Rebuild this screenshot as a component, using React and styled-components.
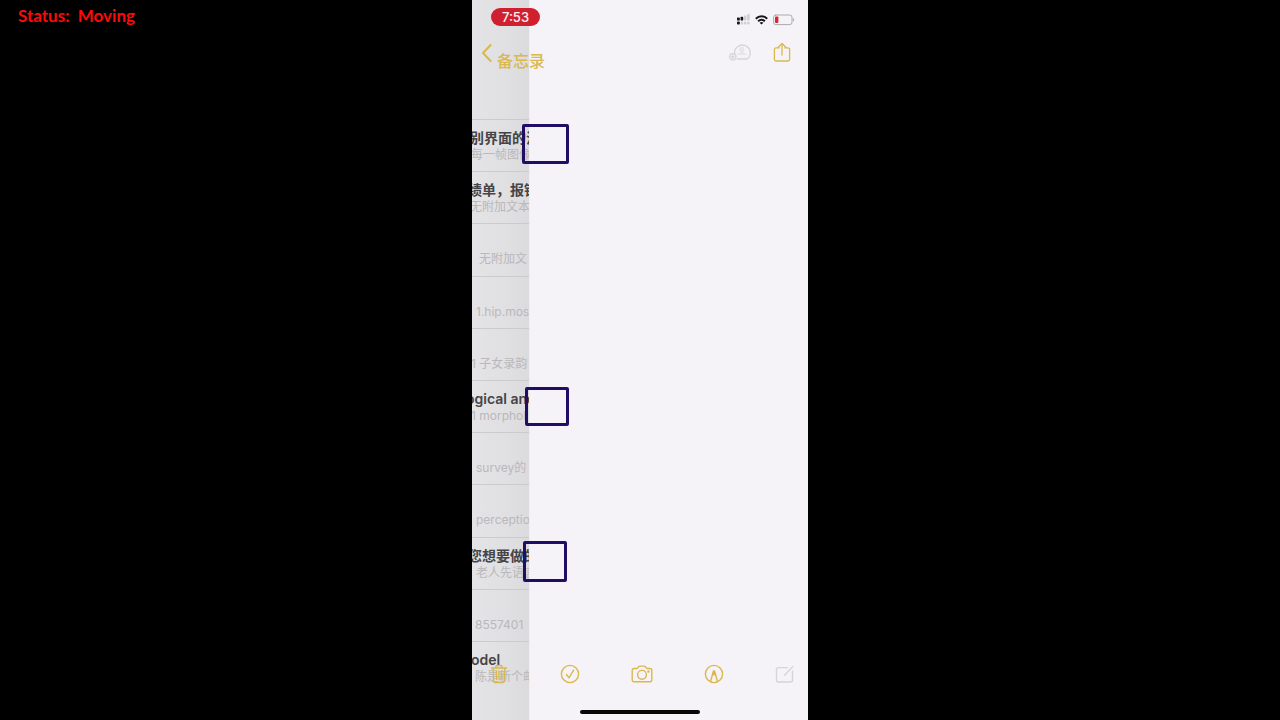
import React from "react";
import styled, { createGlobalStyle } from "styled-components";

const latin = '"Inter", "Liberation Sans"';
const cjk = '"Noto Sans CJK SC"';

const GlobalStyle = createGlobalStyle`
  *, *::before, *::after { box-sizing: border-box; }
  body {
    margin: 0;
    background: #000;
    font-family: ${latin}, ${cjk}, sans-serif;
  }
  h2, p, ul { margin: 0; padding: 0; }
`;

const Stage = styled.main`
  position: relative;
  display: flex;
  justify-content: center;
  min-height: 100vh;
  background: #000;
`;

const TrackerStatus = styled.p`
  position: absolute;
  top: 6px;
  left: 18px;
  color: #ff0808;
  font-family: "Lato", "Liberation Sans", sans-serif;
  font-size: 17px;
  font-weight: 700;
  line-height: 20px;
  white-space: pre;
`;

const Phone = styled.section`
  position: relative;
  display: grid;
  grid-template: minmax(0, 1fr) / minmax(0, 1fr);
  height: 100vh;
  aspect-ratio: 7 / 15;
  overflow: hidden;
  background: #f5f3f7;
`;

const Panes = styled.div`
  grid-area: 1 / 1;
  display: grid;
  grid-template-columns: 17% 1fr;
  min-height: 0;
`;

const NoteList = styled.ul`
  display: flex;
  flex-direction: column;
  min-width: 0;
  padding: 119px 0 27px;
  overflow: hidden;
  list-style: none;
  background: linear-gradient(90deg, #e4e3e6, #e0dfe2 60%, #dbdadd);
`;

const NoteItem = styled.li`
  flex: 1 1 0;
  min-height: 0;
  padding-top: 9px;
  overflow: hidden;
  border-top: 1px solid #cbcacd;
  white-space: nowrap;
`;

const NoteTitle = styled.h2`
  height: 17px;
  color: #454447;
  font-size: 14px;
  font-weight: 600;
  line-height: 17px;
  text-indent: ${(p) => p.$start}px;
`;

const NotePreview = styled.p`
  color: #b9b8bb;
  font-size: 12px;
  line-height: 18px;
  text-indent: ${(p) => p.$start}px;
`;

const NotePage = styled.article`
  background: #f5f3f7;
  border-left: 1px solid #efeef2;
`;

const Chrome = styled.div`
  z-index: 1;
  grid-area: 1 / 1;
  display: flex;
  flex-direction: column;
  min-height: 0;
`;

const StatusBar = styled.header`
  display: flex;
  align-items: flex-start;
  justify-content: space-between;
  height: 40px;
  padding: 8px 13px 0 19px;
`;

const Clock = styled.time`
  width: 49px;
  border-radius: 9px;
  background: #d0202f;
  color: #fff1f1;
  font-size: 13px;
  font-weight: 500;
  line-height: 18px;
  text-align: center;
`;

const Indicators = styled.div`
  display: flex;
  align-items: center;
  gap: 5px;
  padding-top: 6px;
  svg { display: block; }
`;

const NavBar = styled.nav`
  display: flex;
  align-items: flex-start;
  justify-content: space-between;
  padding: 0 14px 0 9px;
`;

const PlainButton = styled.button`
  display: flex;
  align-items: center;
  justify-content: center;
  padding: 0;
  border: 0;
  background: none;
  color: ${(p) => (p.$muted ? "#d5d4d7" : "#d9b84f")};
  font: inherit;
  svg { display: block; }
`;

const BackButton = styled(PlainButton)`
  align-items: flex-start;
  gap: 5px;
  padding-top: 3px;
  span {
    padding-top: 6px;
    font-size: 16px;
    font-weight: 500;
    line-height: 24px;
  }
`;

const NavActions = styled.div`
  display: flex;
  gap: 18px;
`;

const Toolbar = styled.footer`
  display: flex;
  justify-content: space-between;
  margin-top: auto;
  padding: 0 11px 24px 15px;
`;

const HomeIndicator = styled.div`
  align-self: center;
  width: 36%;
  height: 4px;
  margin-bottom: 6px;
  border-radius: 2px;
  background: #050505;
`;

const Marker = styled.div`
  position: absolute;
  z-index: 2;
  top: ${(p) => p.$y}px;
  left: ${(p) => p.$x}px;
  width: ${(p) => p.$w}px;
  height: ${(p) => p.$h}px;
  border: 3px solid #1f0d66;
  border-radius: 2px;
`;

const Glyph = ({ w = 24, h = 24, children, ...rest }) => (
  <svg
    width={w}
    height={h}
    viewBox={`0 0 ${w} ${h}`}
    fill="none"
    stroke="currentColor"
    strokeWidth="1.4"
    strokeLinecap="round"
    strokeLinejoin="round"
    aria-hidden="true"
    {...rest}
  >
    {children}
  </svg>
);

const SignalIcon = () => (
  <Glyph w={14} h={12} stroke="none" fill="#161616">
    <rect x="1" y="3.6" width="2.8" height="3" rx="0.7" />
    <rect x="4.6" y="2.8" width="2.6" height="3.8" rx="0.7" />
    <rect x="1" y="7.6" width="2.8" height="3" rx="0.8" />
    <g fill="#cfced2">
      <rect x="8" y="1.4" width="2.4" height="5.2" rx="0.7" />
      <rect x="11.2" y="0" width="2.4" height="6.6" rx="0.7" />
      <rect x="4.6" y="7.8" width="2.6" height="2.8" rx="0.8" />
      <rect x="8" y="7.8" width="2.4" height="2.8" rx="0.8" />
      <rect x="11.2" y="7.8" width="2.4" height="2.8" rx="0.8" />
    </g>
  </Glyph>
);

const WifiIcon = () => (
  <Glyph w={13} h={10} stroke="#161616" strokeWidth="2" strokeLinecap="butt">
    <path d="M.8 3.7C4.1.5 8.9.5 12.2 3.7M3.1 6.2c2-1.8 4.8-1.8 6.8 0" />
    <path d="M6.5 9.5 4.6 7.7c1.1-.9 2.7-.9 3.8 0Z" fill="#161616" stroke="none" />
  </Glyph>
);

const BatteryIcon = () => (
  <Glyph w={22} h={12} strokeWidth="1">
    <rect x=".6" y="1" width="18.4" height="9.6" rx="2.2" stroke="#aaa9ad" />
    <rect x="2" y="2.5" width="3.4" height="6.6" rx="1" fill="#d62638" stroke="none" />
    <path d="M20 4v3.6c.7-.3 1.1-1 1.1-1.8S20.700 4.300 20 4Z" fill="#aaa9ad" stroke="none" />
  </Glyph>
);

const ChevronIcon = () => (
  <Glyph w={11} h={20} strokeWidth="2">
    <path d="M9.600 2 2 10 9.600 18" />
  </Glyph>
);

const AddPersonIcon = () => (
  <Glyph strokeWidth="1.3">
    <path d="M6.600 13.600a7.800 7.800 0 1 1 12.600 5.400H9.200" />
    <path
      d="M13.700 6.400c1.600 0 2.600 1 2.600 2.500s-.8 2.500-1 3.100c.2 1 3 1 3.400 3H9c.4-2 3.200-2 3.400-3-.3-.6-1.200-1.500-1.200-3.100s1-2.500 2.500-2.500Z"
      fill="currentColor"
      fillOpacity=".45"
      stroke="none"
    />
    <circle cx="4.800" cy="16.800" r="3.200" />
    <path d="M3.300 16.800h3M4.800 15.300v3" />
  </Glyph>
);

const ShareIcon = () => (
  <Glyph strokeWidth="1.3">
    <path d="M9.200 7.800H6.200a1.800 1.800 0 0 0-1.800 1.800v9.600A1.800 1.800 0 0 0 6.200 21h11.600a1.800 1.800 0 0 0 1.800-1.800V9.600a1.800 1.800 0 0 0-1.800-1.800h-3M12 15V3.800M8.400 7 12 3.400 15.600 7" />
  </Glyph>
);

const TrashIcon = () => (
  <Glyph>
    <path d="M4.500 6h15M9 5.800V4.500c0-.6.400-1 1-1h4c.6 0 1 .4 1 1v1.300M6 6.200l.7 13c.1.800.6 1.300 1.400 1.300h7.800c.8 0 1.300-.5 1.400-1.300l.7-13M9.400 9l.2 8.500M12 9v8.500M14.600 9l-.2 8.500" />
  </Glyph>
);

const CheckIcon = () => (
  <Glyph>
    <circle cx="11" cy="12" r="8.6" />
    <path d="m7.500 12.500 2.500 3.300 4.600-7.600" />
  </Glyph>
);

const CameraIcon = () => (
  <Glyph>
    <path d="M2.200 8.400c0-1.200.7-1.900 1.900-1.900h2.400c.6 0 .9-.2 1.200-.6l.8-1.100c.4-.5.8-.7 1.400-.7h4.200c.6 0 1 .2 1.400.7l.8 1.100c.3.4.6.6 1.200.6h2.400c1.200 0 1.900.7 1.900 1.900v9.400c0 1.200-.7 1.900-1.900 1.900H4.100c-1.200 0-1.900-.7-1.900-1.900Z" />
    <circle cx="12" cy="12.800" r="4.400" />
    <circle cx="18.400" cy="9.500" r=".5" fill="currentColor" />
  </Glyph>
);

const MarkupIcon = () => (
  <Glyph>
    <circle cx="12" cy="12" r="8.600" />
    <path d="m8.600 19.300 2.800-10h1.200l2.800 10" />
    <path d="m9.900 14.300 1.400-5.600c.2-.7 1.200-.7 1.400 0l1.400 5.600c-.8-.7-1.400-1-2.100-1s-1.300.3-2.100 1Z" fill="currentColor" stroke="none" />
  </Glyph>
);

const ComposeIcon = () => (
  <Glyph>
    <path d="M14.500 5.600H5.400c-1.200 0-1.900.7-1.900 1.900v10.600c0 1.200.7 1.900 1.900 1.900h12.200c1.200 0 1.900-.7 1.900-1.900V9.200M11.600 13.300 19.800 4.600" />
  </Glyph>
);

const notes = [
  { title: "别界面的注", titleStart: -2, preview: "每一帧图像", previewStart: -1 },
  { title: "绩单，报销", titleStart: -4, preview: "无附加文本", previewStart: -2 },
  { preview: "无附加文", previewStart: 7 },
  { preview: "1.hip.mos", previewStart: 4 },
  { preview: "1 子女录韵", previewStart: -1 },
  { title: "ogical and", titleStart: -6, preview: "1 morphol", previewStart: -1 },
  { preview: "survey的", previewStart: 4 },
  { preview: "perceptio", previewStart: 4 },
  { title: "您想要做的", titleStart: -4, preview: "老人先语言", previewStart: 4 },
  { preview: "8557401", previewStart: 3 },
  { title: "odel", titleStart: -1, preview: "陈是新个邮", previewStart: 3 },
];

const markers = [
  { x: 50, y: 124, w: 47, h: 40 },
  { x: 53, y: 387, w: 44, h: 39 },
  { x: 51, y: 541, w: 44, h: 41 },
];

const tools = [
  { label: "删除", Icon: TrashIcon },
  { label: "核对清单", Icon: CheckIcon },
  { label: "相机", Icon: CameraIcon },
  { label: "标记", Icon: MarkupIcon },
  { label: "新建备忘录", Icon: ComposeIcon, muted: true },
];

export default function App() {
  return (
    <>
      <GlobalStyle />
      <Stage>
        <TrackerStatus>Status:  Moving</TrackerStatus>
        <Phone>
          <Panes>
            <NoteList>
              {notes.map((note) => (
                <NoteItem key={note.preview}>
                  <NoteTitle $start={note.titleStart || 0}>{note.title}</NoteTitle>
                  <NotePreview $start={note.previewStart}>{note.preview}</NotePreview>
                </NoteItem>
              ))}
            </NoteList>
            <NotePage />
          </Panes>
          <Chrome>
            <StatusBar>
              <Clock>7:53</Clock>
              <Indicators>
                <SignalIcon />
                <WifiIcon />
                <BatteryIcon />
              </Indicators>
            </StatusBar>
            <NavBar>
              <BackButton type="button">
                <ChevronIcon />
                <span>备忘录</span>
              </BackButton>
              <NavActions>
                <PlainButton type="button" aria-label="添加联系人" $muted>
                  <AddPersonIcon />
                </PlainButton>
                <PlainButton type="button" aria-label="共享">
                  <ShareIcon />
                </PlainButton>
              </NavActions>
            </NavBar>
            <Toolbar>
              {tools.map(({ label, Icon, muted }) => (
                <PlainButton key={label} type="button" aria-label={label} $muted={muted}>
                  <Icon />
                </PlainButton>
              ))}
            </Toolbar>
            <HomeIndicator />
          </Chrome>
          {markers.map((m) => (
            <Marker key={m.y} $x={m.x} $y={m.y} $w={m.w} $h={m.h} />
          ))}
        </Phone>
      </Stage>
    </>
  );
}
